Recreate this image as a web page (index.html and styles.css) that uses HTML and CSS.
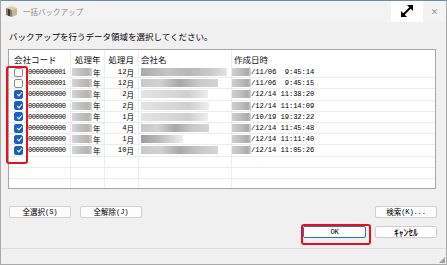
FILE: index.html
```html
<!DOCTYPE html>
<html lang="ja">
<head>
<meta charset="utf-8">
<link rel="stylesheet" href="styles.css">
</head>
<body>
<div class="window">
  <div class="titlebar">
    <svg class="appicon" width="13" height="13" viewBox="0 0 13 13">
      <polygon points="1,3 6,1 12,3 7,5" fill="#d9cfae"/>
      <polygon points="1,3 7,5 7,12 1,10" fill="#8a7f66"/>
      <polygon points="7,5 12,3 12,10 7,12" fill="#c2b994"/>
      <polygon points="3,3.8 5,4.5 5,11.2 3,10.5" fill="#3d3a33"/>
    </svg>
    <span class="title">一括バックアップ</span>
    <span class="spacer"></span>
    <span class="expand">
      <svg width="16" height="16" viewBox="0 0 16 16">
        <line x1="4" y1="12" x2="12" y2="4" stroke="#000" stroke-width="2"/>
        <polygon points="8,2 14,2 14,8" fill="#000"/>
        <polygon points="2,8 2,14 8,14" fill="#000"/>
      </svg>
    </span>
    <span class="close">✕</span>
  </div>

  <div class="prompt">バックアップを行うデータ領域を選択してください。</div>

  <div class="grid">
    <div class="row head">
      <div class="c c1">会社コード</div>
      <div class="c c2">処理年</div>
      <div class="c c3">処理月</div>
      <div class="c c4">会社名</div>
      <div class="c c5">作成日時</div>
    </div>

    <div class="row">
      <div class="c c1"><span class="cb"></span><span class="mono code">0000000001</span></div>
      <div class="c c2"><span class="blur by"></span><span class="kj">年</span></div>
      <div class="c c3"><span class="mono">12</span><span class="kj">月</span></div>
      <div class="c c4"><span class="blur bn1" style="width:86px"></span></div>
      <div class="c c5"><span class="blur bd"></span><span class="mono date">/11/06  9:45:14</span></div>
    </div>
    <div class="row">
      <div class="c c1"><span class="cb"></span><span class="mono code">0000000001</span></div>
      <div class="c c2"><span class="blur by"></span><span class="kj">年</span></div>
      <div class="c c3"><span class="mono">12</span><span class="kj">月</span></div>
      <div class="c c4"><span class="blur bn2" style="width:77px"></span></div>
      <div class="c c5"><span class="blur bd"></span><span class="mono date">/11/06  9:45:15</span></div>
    </div>
    <div class="row">
      <div class="c c1"><span class="cb on"></span><span class="mono code">0000000000</span></div>
      <div class="c c2"><span class="blur by"></span><span class="kj">年</span></div>
      <div class="c c3"><span class="mono">2</span><span class="kj">月</span></div>
      <div class="c c4"><span class="blur bn3" style="width:67px"></span></div>
      <div class="c c5"><span class="blur bd"></span><span class="mono date">/12/14 11:38:20</span></div>
    </div>
    <div class="row">
      <div class="c c1"><span class="cb on"></span><span class="mono code">0000000000</span></div>
      <div class="c c2"><span class="blur by"></span><span class="kj">年</span></div>
      <div class="c c3"><span class="mono">2</span><span class="kj">月</span></div>
      <div class="c c4"><span class="blur bn3" style="width:68px"></span></div>
      <div class="c c5"><span class="blur bd"></span><span class="mono date">/12/14 11:14:09</span></div>
    </div>
    <div class="row">
      <div class="c c1"><span class="cb on"></span><span class="mono code">0000000000</span></div>
      <div class="c c2"><span class="blur by"></span><span class="kj">年</span></div>
      <div class="c c3"><span class="mono">1</span><span class="kj">月</span></div>
      <div class="c c4"><span class="blur bn3" style="width:67px"></span></div>
      <div class="c c5"><span class="blur bd"></span><span class="mono date">/10/19 19:32:22</span></div>
    </div>
    <div class="row">
      <div class="c c1"><span class="cb on"></span><span class="mono code">0000000000</span></div>
      <div class="c c2"><span class="blur by"></span><span class="kj">年</span></div>
      <div class="c c3"><span class="mono">4</span><span class="kj">月</span></div>
      <div class="c c4"><span class="blur bn2" style="width:68px"></span></div>
      <div class="c c5"><span class="blur bd"></span><span class="mono date">/12/14 11:45:48</span></div>
    </div>
    <div class="row">
      <div class="c c1"><span class="cb on"></span><span class="mono code">0000000000</span></div>
      <div class="c c2"><span class="blur by"></span><span class="kj">年</span></div>
      <div class="c c3"><span class="mono">1</span><span class="kj">月</span></div>
      <div class="c c4"><span class="blur bn4" style="width:42px"></span></div>
      <div class="c c5"><span class="blur bd"></span><span class="mono date">/12/14 11:11:40</span></div>
    </div>
    <div class="row">
      <div class="c c1"><span class="cb on"></span><span class="mono code">0000000000</span></div>
      <div class="c c2"><span class="blur by"></span><span class="kj">年</span></div>
      <div class="c c3"><span class="mono">10</span><span class="kj">月</span></div>
      <div class="c c4"><span class="blur bn2" style="width:77px"></span></div>
      <div class="c c5"><span class="blur bd"></span><span class="mono date">/12/14 11:05:26</span></div>
    </div>
    <div class="row"><div class="c c1"></div><div class="c c2"></div><div class="c c3"></div><div class="c c4"></div><div class="c c5"></div></div>
    <div class="row"><div class="c c1"></div><div class="c c2"></div><div class="c c3"></div><div class="c c4"></div><div class="c c5"></div></div>
    <div class="row"><div class="c c1"></div><div class="c c2"></div><div class="c c3"></div><div class="c c4"></div><div class="c c5"></div></div>
  </div>

  <div class="btnrow first">
    <button class="btn">全選択<span class="mono">(S)</span></button>
    <button class="btn">全解除<span class="mono">(J)</span></button>
    <span class="spacer"></span>
    <button class="btn">検索<span class="mono">(K)...</span></button>
  </div>
  <div class="btnrow second">
    <span class="spacer"></span>
    <button class="btn default"><span class="mono">OK</span></button>
    <button class="btn"><span class="hw">ｷｬﾝｾﾙ</span></button>
  </div>

  <div class="statusbar"><span class="grip"></span></div>

  <div class="mark mark-cb"></div>
  <div class="mark mark-ok"></div>
</div>
</body>
</html>
```

FILE: styles.css
```css
* { box-sizing: border-box; }
html, body { margin: 0; padding: 0; }
body {
  width: 447px;
  height: 265px;
  overflow: hidden;
  background: #f0f0f0;
  font-family: "Noto Sans CJK JP", "Noto Sans", sans-serif;
  color: #000;
}
.window {
  position: relative;
  width: 447px;
  height: 265px;
  background: #f0f0f0;
  border: 1px solid #a9a9a9;
  border-top-color: #6f8aa8;
  display: flex;
  flex-direction: column;
}
.titlebar {
  height: 21px;
  display: flex;
  align-items: center;
  background: #f3f3f3;
  padding-left: 4px;
}
.appicon { flex: none; }
.title {
  margin-left: 5px;
  font-size: 7.5px;
  color: #8c8c8c;
  line-height: 1;
}
.spacer { flex: 1; }
.expand {
  width: 32px;
  height: 21px;
  margin-top: -1px;
  background: #fff;
  display: flex;
  align-items: center;
  justify-content: center;
}
.close {
  width: 23px;
  text-align: center;
  font-size: 9px;
  color: #9a9a9a;
  font-family: "DejaVu Sans", sans-serif;
}
.prompt {
  margin: 9px 0 0 8px;
  font-size: 8.5px;
  line-height: 10px;
  height: 18px;
}
.grid {
  margin-left: 7px;
  width: 428px;
  height: 140px;
  background: #fff;
  border: 1px solid #a6a6a6;
  overflow: hidden;
}
.row {
  display: grid;
  grid-template-columns: 62px 34px 34px 93px 1fr;
  height: 11.2px;
  border-bottom: 1px solid #ececec;
}
.row.head {
  height: 17px;
  border-bottom: none;
  font-size: 8.5px;
  color: #111;
}
.c {
  border-right: 1px solid #ececec;
  display: flex;
  align-items: center;
  white-space: nowrap;
  overflow: hidden;
}
.c5 { border-right: none; }
.head .c1 { padding-left: 5px; }
.head .c2 { padding-left: 4px; }
.head .c3 { padding-left: 2px; }
.head .c4 { padding-left: 2px; }
.head .c5 { padding-left: 2px; }

.mono {
  font-family: "Liberation Mono", monospace;
  font-size: 7.2px;
  color: #000;
}
.code { letter-spacing: -0.55px; margin-left: 5px; }
.date { white-space: pre; letter-spacing: -0.1px; }
.kj { font-size: 7.5px; color: #000; }

.cb {
  width: 9px;
  height: 9px;
  margin-left: 5px;
  border: 1px solid #8a8a8a;
  border-radius: 2px;
  background: #fff;
  flex: none;
}
.cb.on {
  background: #1a5fc4;
  border-color: #1a5fc4;
  position: relative;
}
.cb.on::after {
  content: "";
  position: absolute;
  left: 2.5px;
  top: 0.5px;
  width: 2px;
  height: 4px;
  border: solid #fff;
  border-width: 0 1px 1px 0;
  transform: rotate(40deg);
}

.c2 { padding-left: 1px; }
.c3 { justify-content: flex-end; padding-right: 4px; }
.c4 { padding-left: 2px; }
.c5 { padding-left: 0; }

.blur { display: block; height: 8px; flex: none; }
.by {
  width: 20px;
  margin-right: 1px;
  background: linear-gradient(90deg, #d6d6d6, #c2c2c2 40%, #b4b4b4 80%, #cfcfcf);
}
.bd {
  width: 19px;
  background: linear-gradient(90deg, #cfcfcf, #bcbcbc 50%, #aaaaaa 85%, #d8d8d8);
}
.bn1 { background: linear-gradient(90deg, #a9a9a9, #c4c4c4 30%, #b8b8b8 55%, #c9c9c9 80%, #e4e4e4); }
.bn2 { background: linear-gradient(90deg, #c9c9c9, #d2d2d2 25%, #a9a9a9 50%, #c8c8c8 75%, #d5d5d5); }
.bn3 { background: linear-gradient(90deg, #e4e4e4, #d9d9d9 40%, #cfcfcf 70%, #eeeeee); }
.bn4 { background: linear-gradient(90deg, #9c9c9c, #b8b8b8 40%, #dcdcdc 80%, #efefef); }

.btnrow {
  display: flex;
  align-items: center;
  height: 12px;
  padding: 0 9px 0 8px;
}
.btnrow.first { margin-top: 17px; }
.btnrow.second { margin-top: 8px; }
.btnrow.first .btn + .btn { margin-left: 9px; }
.btnrow.second .btn + .btn { margin-left: 9px; }
.btn {
  width: 62px;
  height: 12px;
  padding: 0;
  background: #fdfdfd;
  border: 1px solid #cfcfcf;
  border-radius: 2px;
  font-family: "Noto Sans CJK JP", sans-serif;
  font-size: 7.5px;
  line-height: 10px;
  color: #000;
  display: flex;
  align-items: center;
  justify-content: center;
}
.btn .mono { font-size: 7.2px; letter-spacing: -0.2px; }
.btn .hw { font-size: 9.5px; font-weight: 500; }
.btn.default {
  width: 63px;
  border-color: #2a6fc9;
}
.statusbar {
  margin-top: auto;
  height: 16px;
  border-top: 1px solid #dcdcdc;
  position: relative;
}
.grip {
  position: absolute;
  right: 1px;
  bottom: 1px;
  width: 6px;
  height: 6px;
  background:
    radial-gradient(circle, #9a9a9a 0.7px, transparent 0.8px) 0 0 / 2px 2px;
  clip-path: polygon(100% 0, 100% 100%, 0 100%);
}
.mark {
  position: absolute;
  border: 2.5px solid #e8101a;
  border-radius: 3px;
}
.mark-cb { left: 5px; top: 65px; width: 22px; height: 98px; }
.mark-ok { left: 300px; top: 223px; width: 70px; height: 21px; }
```
